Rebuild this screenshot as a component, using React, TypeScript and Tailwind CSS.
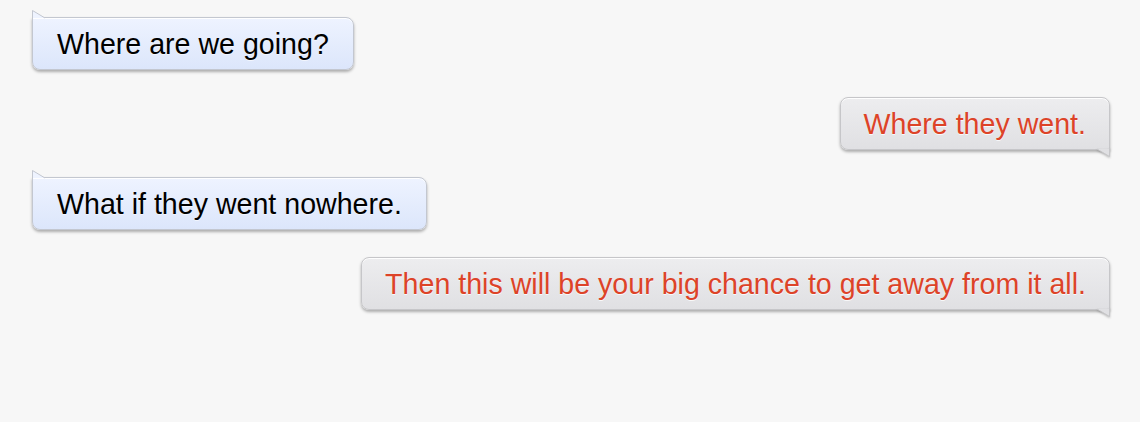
import React from "react";

type Msg = { text: string; mine: boolean };

const messages: Msg[] = [
  { text: "Where are we going?", mine: false },
  { text: "Where they went.", mine: true },
  { text: "What if they went nowhere.", mine: false },
  { text: "Then this will be your big chance to get away from it all.", mine: true },
];

const Bubble = ({ text, mine }: Msg) => {
  if (!mine) {
    return (
      <div className="relative rounded-[8px] rounded-tl-none border border-[#c3c7d0] bg-gradient-to-b from-[#eef3ff] to-[#dce6fb] px-[24px] pt-[11px] pb-[9px] leading-[31px] text-black shadow-[0_2px_3px_rgba(0,0,0,0.3),inset_0_1px_0_rgba(255,255,255,0.9)] [text-shadow:0_1px_0_rgba(255,255,255,0.6)]">
        <svg className="absolute left-[-1px] top-[-8px]" width="14" height="9" viewBox="0 0 14 9">
          <path d="M0.5 0.5 L13 8 L0.5 8 Z" fill="#eef3ff" />
          <path d="M0.5 9 L0.5 0.5 L13 8" fill="none" stroke="#c3c7d0" strokeWidth="1" />
        </svg>
        {text}
      </div>
    );
  }
  return (
    <div className="relative rounded-[8px] rounded-br-none border border-[#c6c6c9] bg-gradient-to-b from-[#ededef] to-[#e0e0e3] px-[23px] pt-[11px] pb-[9px] leading-[31px] text-[#dd4328] shadow-[0_2px_3px_rgba(0,0,0,0.3),inset_0_1px_0_rgba(255,255,255,0.9)] [text-shadow:0_1px_0_rgba(255,255,255,0.8)]">
      <svg className="absolute right-[-1px] bottom-[-8px] drop-shadow-[0_1px_1px_rgba(0,0,0,0.25)]" width="14" height="9" viewBox="0 0 14 9">
        <path d="M13.5 8.5 L1 1 L13.5 1 Z" fill="#e0e0e3" />
        <path d="M13.5 0 L13.5 8.5 L1 1" fill="none" stroke="#c6c6c9" strokeWidth="1" />
      </svg>
      {text}
    </div>
  );
};

export default function App() {
  return (
    <div className="h-[422px] w-[1140px] bg-[#f7f7f7] pl-[32px] pr-[30px] pt-[17px] font-['Liberation_Sans',Arial,sans-serif] text-[28.6px]">
      <div className="flex flex-col gap-[27px]">
        {messages.map((m, i) => (
          <div key={i} className={m.mine ? "flex justify-end" : "flex justify-start"}>
            <Bubble {...m} />
          </div>
        ))}
      </div>
    </div>
  );
}
